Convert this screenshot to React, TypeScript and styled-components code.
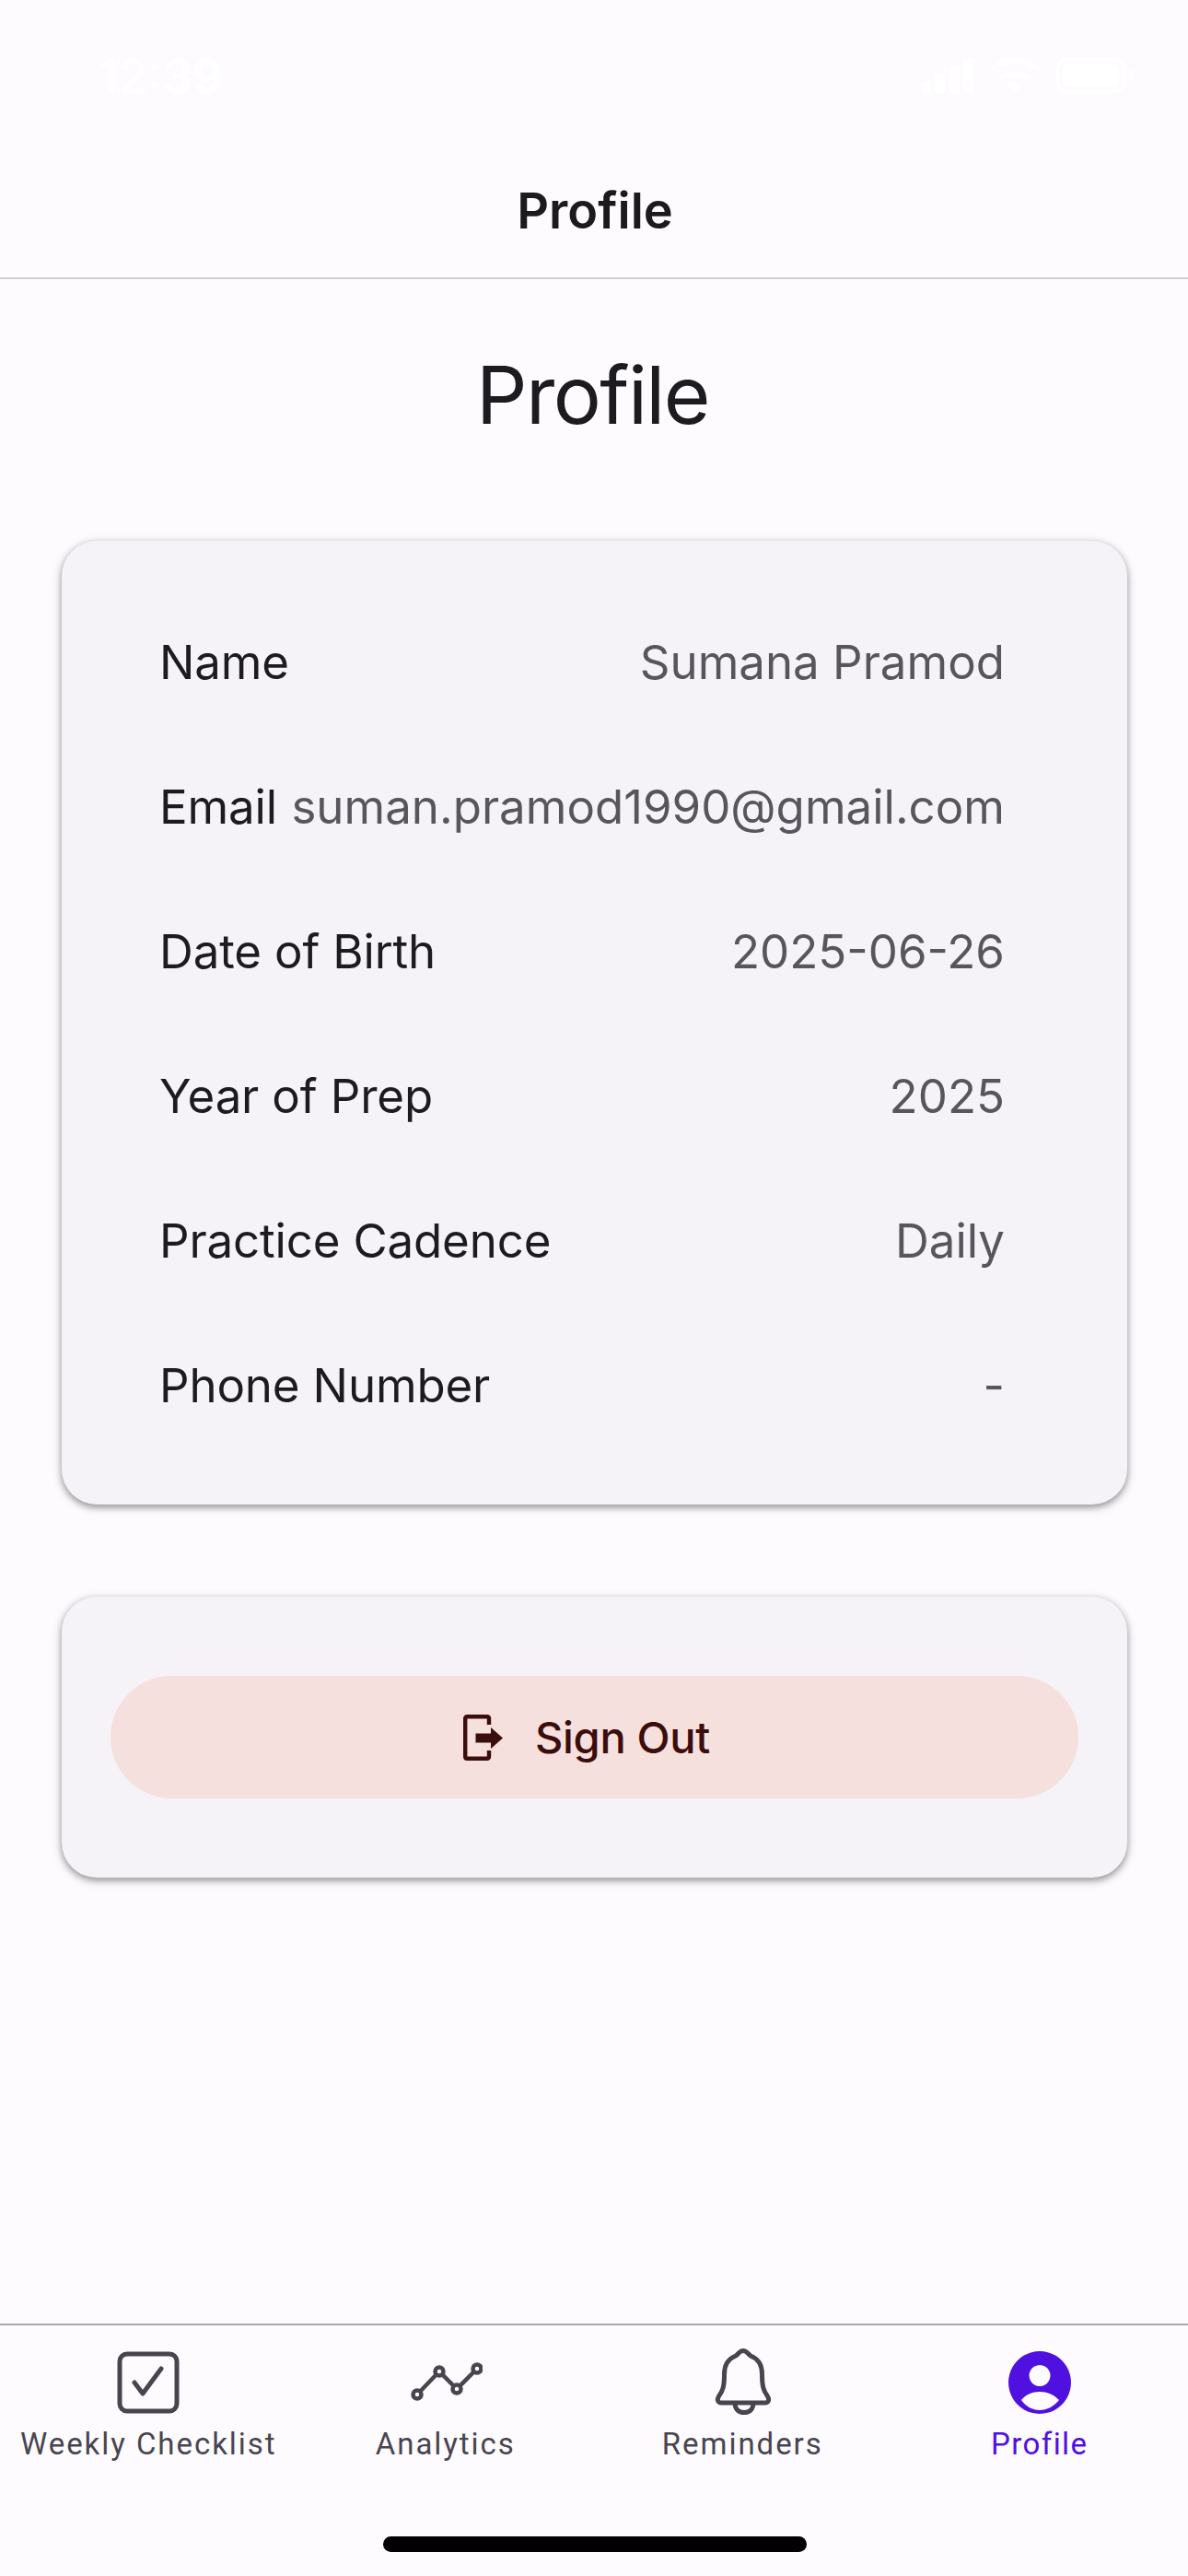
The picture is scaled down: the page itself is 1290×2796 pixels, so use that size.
import React from "react";
import styled, { createGlobalStyle } from "styled-components";

const Global = createGlobalStyle`
  html, body { margin: 0; padding: 0; background: #fefbff; }
  * { box-sizing: border-box; }
`;

const Screen = styled.div`
  width: 1290px;
  height: 2796px;
  display: flex;
  flex-direction: column;
  background: #fefbff;
  font-family: Inter, "Liberation Sans", sans-serif;
  color: #1c1b1f;
  overflow: hidden;
`;

const StatusBar = styled.div`
  height: 141px;
  flex: none;
  padding: 60px 60px 0 107px;
  display: flex;
  justify-content: space-between;
  align-items: flex-start;
  color: #ffffff;
`;

const Clock = styled.span`
  font-size: 51px;
  line-height: 46px;
  font-weight: 600;
`;

const StatusIcons = styled.div`
  display: flex;
  align-items: center;
  gap: 18px;
  padding-top: 3px;
`;

const TopBar = styled.header`
  height: 162px;
  flex: none;
  display: flex;
  align-items: flex-start;
  justify-content: center;
  border-bottom: 2px solid #cfcdd0;
  font-size: 54px;
  font-weight: 600;
  line-height: 64px;
  padding: 56px 0 0 2px;
  color: #1b1b1d;
`;

const Main = styled.main`
  flex: 1;
  display: flex;
  flex-direction: column;
  padding: 0 67px;
`;

const PageTitle = styled.h1`
  margin: 71px 0 0;
  height: 213px;
  padding-right: 3px;
  text-align: center;
  font-size: 87px;
  line-height: 110px;
  font-weight: 400;
  letter-spacing: -1.6px;
  color: #1c1b1f;
`;

const Card = styled.section`
  width: 1157px;
  background: #f5f3f8;
  border-radius: 38px;
  box-shadow: 0 3px 6px rgba(0, 0, 0, 0.3), 0 3px 9px 3px rgba(0, 0, 0, 0.12);
`;

const InfoCard = styled(Card)`
  height: 1046px;
  padding: 53px 133px 0 106px;
  display: flex;
  flex-direction: column;
`;

const Row = styled.div`
  height: 157px;
  flex: none;
  display: flex;
  align-items: center;
  justify-content: space-between;
  font-size: 51px;
`;

const RowLabel = styled.span`
  color: #1c1b1f;
  letter-spacing: -0.15px;
`;

const RowValue = styled.span`
  color: #58565c;
`;

const ActionCard = styled(Card)`
  margin-top: 100px;
  height: 305px;
  padding: 86px 53px;
`;

const SignOut = styled.button`
  width: 100%;
  height: 133px;
  border: 0;
  padding: 0 17px 0 0;
  border-radius: 67px;
  background: #f5e0dd;
  color: #3b0d0c;
  font-family: inherit;
  font-size: 47px;
  font-weight: 450;
  letter-spacing: -0.3px;
  display: flex;
  align-items: center;
  justify-content: center;
  gap: 34px;
`;

const BottomNav = styled.nav`
  height: 274px;
  flex: none;
  border-top: 2px solid #a9a8ac;
  position: relative;
  display: grid;
  grid-template-columns: repeat(4, 1fr);
  align-items: start;
`;

const NavItem = styled.div<{ $active?: boolean }>`
  display: flex;
  flex-direction: column;
  align-items: center;
  color: ${(p) => (p.$active ? "#4f10e0" : "#49454f")};
  font-family: Roboto, sans-serif;
  font-size: 33px;
  font-weight: ${(p) => (p.$active ? 450 : 400)};
  letter-spacing: ${(p) => (p.$active ? "1.4px" : "1.95px")};
`;

const NavIcon = styled.svg`
  width: 80px;
  height: 80px;
  margin-top: 22px;
  display: block;
`;

const NavLabel = styled.span`
  margin-top: 5px;
  line-height: 44px;
`;

const HomeIndicator = styled.div`
  position: absolute;
  left: 416px;
  bottom: 26px;
  width: 460px;
  height: 17px;
  border-radius: 9px;
  background: #000;
`;

const rows: [string, string][] = [
  ["Name", "Sumana Pramod"],
  ["Email", "suman.pramod1990@gmail.com"],
  ["Date of Birth", "2025-06-26"],
  ["Year of Prep", "2025"],
  ["Practice Cadence", "Daily"],
  ["Phone Number", "-"],
];

export default function App() {
  return (
    <Screen>
      <Global />
      <StatusBar>
        <Clock>12:39</Clock>
        <StatusIcons>
          <svg width="57" height="38" viewBox="0 0 57 38" fill="#fff">
            <rect x="0" y="25" width="11" height="13" rx="3" />
            <rect x="15" y="17" width="11" height="21" rx="3" />
            <rect x="31" y="9" width="11" height="29" rx="3" />
            <rect x="46" y="0" width="11" height="38" rx="3" />
          </svg>
          <svg width="54" height="38" viewBox="0 0 54 38" fill="none" stroke="#fff" strokeWidth="6">
            <path d="M2 12C16 0 38 0 52 12" />
            <path d="M11 23C20 15 34 15 43 23" />
            <path d="M27 38L18 30C23 26 31 26 36 30Z" fill="#fff" stroke="none" />
          </svg>
          <svg width="83" height="38" viewBox="0 0 83 38" fill="none">
            <rect x="1.5" y="1.5" width="72" height="35" rx="10" stroke="#fff" strokeWidth="3" />
            <rect x="7" y="7" width="61" height="24" rx="6" fill="#fff" />
            <rect x="78" y="13" width="5" height="12" rx="2.5" fill="#fff" />
          </svg>
        </StatusIcons>
      </StatusBar>

      <TopBar>Profile</TopBar>

      <Main>
        <PageTitle>Profile</PageTitle>
        <InfoCard>
          {rows.map(([label, value]) => (
            <Row key={label}>
              <RowLabel>{label}</RowLabel>
              <RowValue>{value}</RowValue>
            </Row>
          ))}
        </InfoCard>
        <ActionCard>
          <SignOut>
            <svg width="44" height="50" viewBox="0 0 44 50" fill="none">
              <path
                d="M28 11V4C28 3 27 2.2 26 2.2H4.5C3 2.2 2.2 3 2.2 4.5V45.5C2.2 47 3 47.8 4.5 47.8H26C27 47.8 28 47 28 46V39"
                stroke="#3b0d0c"
                strokeWidth="4.4"
              />
              <path d="M13.5 20.5H30V14L43 25.5L30 37V30.5H13.5Z" fill="#3b0d0c" />
            </svg>
            Sign Out
          </SignOut>
        </ActionCard>
      </Main>

      <BottomNav>
        <NavItem>
          <NavIcon viewBox="0 0 80 80" fill="none" stroke="#49454f">
            <rect x="9" y="9" width="62" height="62" rx="8" strokeWidth="5" />
            <path d="M25 40L34 52L54 25" strokeWidth="5" strokeLinecap="round" strokeLinejoin="round" />
          </NavIcon>
          <NavLabel>Weekly Checklist</NavLabel>
        </NavItem>
        <NavItem>
          <NavIcon viewBox="0 0 80 80" fill="none" stroke="#49454f" strokeWidth="4.5">
            <path d="M9 53L33 28L52 47L74 25" />
            <circle cx="9" cy="53" r="4.5" fill="#fefbff" />
            <circle cx="33" cy="28" r="4.5" fill="#fefbff" />
            <circle cx="52" cy="47" r="4.5" fill="#fefbff" />
            <circle cx="74" cy="25" r="4.5" fill="#fefbff" />
          </NavIcon>
          <NavLabel>Analytics</NavLabel>
        </NavItem>
        <NavItem>
          <NavIcon viewBox="0 0 80 80" fill="none" stroke="#49454f" strokeWidth="5" strokeLinejoin="round">
            <path d="M41 5.5C45 5.5 46 9 49 11C57 14 61.5 21 61.5 31C61.5 44 63 49 67.5 55C70 59 68 62 65 62H17C14 62 12 59 14.5 55C19 49 20.5 44 20.5 31C20.5 21 25 14 33 11C36 9 37 5.5 41 5.5Z" />
            <path d="M32 62C32 69 36 72.5 42 72.5C48 72.5 52 69 52 62" />
          </NavIcon>
          <NavLabel>Reminders</NavLabel>
        </NavItem>
        <NavItem $active>
          <NavIcon viewBox="0 0 80 80">
            <path
              fill="#4f10e0"
              fillRule="evenodd"
              d="M40 6A34 34 0 1 1 39.99 6ZM40 21A11.5 11.5 0 1 0 40.01 21ZM40 50C32 50 25 53 20 59C25 66 32 70 40 70C48 70 55 66 61 59C55 53 48 50 40 50Z"
            />
          </NavIcon>
          <NavLabel>Profile</NavLabel>
        </NavItem>
        <HomeIndicator />
      </BottomNav>
    </Screen>
  );
}
